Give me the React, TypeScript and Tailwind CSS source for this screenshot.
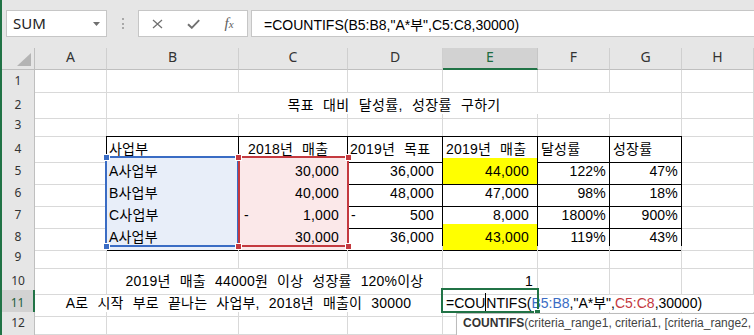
import React from 'react';

const GRID = 'grid grid-cols-[33px_72px_132px_109px_95px_95px_72px_72px_1fr]';
const COLS = ['A', 'B', 'C', 'D', 'E', 'F', 'G', 'H'];

type Def = { t?: React.ReactNode; span?: number; cls?: string; open?: boolean };

const _: Def = {};
const L = (t: string, extra = ''): Def => ({ t, cls: `justify-start pl-[2px] ${extra}` });
const N = (t: string, extra = ''): Def => ({ t, cls: `justify-end pr-[8px] ${extra}` });
const P = (t: string): Def => ({ t, cls: 'justify-end pr-[3px]' });
const Dash = (t: string, extra: string): Def => ({
  t: (
    <>
      <span>-</span>
      <span>{t}</span>
    </>
  ),
  cls: `justify-between pr-[8px] ${extra}`,
});

const BLUE = 'bg-[#e8eef9]';
const PINK = 'bg-[#fbe8e9]';
const YEL = 'bg-[#ffff00]';

const formula = (
  <span className="tracking-normal">
    =COU
    <span className="inline-block w-px h-[19px] bg-black align-[-4px]" />
    NTIFS(<span className="text-[#3a6cc4]">B5:B8</span>,"A*부",
    <span className="text-[#c4393f]">C5:C8</span>,30000)
  </span>
);

// 1행부터 13행까지
const rows: Def[][] = [
  [_, _, _, _, _, _, _, _],
  [
    _,
    { t: <span className="tracking-[0.35px]">목표 대비 달성률, 성장률 구하기</span>, span: 6, cls: 'justify-center' },
    _,
  ],
  [_, _, _, _, _, _, _, _],
  [
    _,
    L('사업부'),
    { t: '2018년 매출', cls: 'justify-start pl-[9px]' },
    L('2019년 목표'),
    L('2019년 매출', 'pl-[3px]'),
    L('달성률', 'pl-[3px]'),
    L('성장률', 'pl-[3px]'),
    _,
  ],
  [_, L('A사업부', BLUE), N('30,000', PINK), N('36,000'), N('44,000', YEL), P('122%'), P('47%'), _],
  [_, L('B사업부', BLUE), N('40,000', PINK), N('48,000'), N('47,000'), P('98%'), P('18%'), _],
  [_, L('C사업부', BLUE), Dash('1,000', `pl-[5px] ${PINK}`), Dash('500', 'pl-[3px]'), N('8,000'), P('1800%'), P('900%'), _],
  [_, L('A사업부', BLUE), N('30,000', PINK), N('36,000'), N('43,000', YEL), P('119%'), P('43%'), _],
  [_, _, _, _, _, _, _, _],
  [
    _,
    { t: '2019년 매출 44000원 이상 성장률 120%이상', span: 3, cls: 'justify-center' },
    { t: '1', cls: 'justify-end pr-[4px]' },
    _,
    _,
    _,
  ],
  [
    { t: 'A로 시작 부로 끝나는 사업부, 2018년 매출이 30000', span: 4, cls: 'justify-center' },
    { t: formula, cls: 'justify-start pl-[3px] relative z-10', open: true },
    { open: true },
    { open: true },
    { open: true },
  ],
  [_, _, _, _, _, _, _, _],
  [_, _, _, _, _, _, _, _],
];

const SPAN: Record<number, string> = { 1: '', 3: 'col-span-3', 4: 'col-span-4', 6: 'col-span-6' };

function inTable(r: number, c: number) {
  return r >= 4 && r <= 8 && c >= 1 && c <= 6;
}

function Square({ cls }: { cls: string }) {
  return <div className={`absolute w-[7px] h-[7px] border border-white ${cls}`} />;
}

export default function App() {
  return (
    <div className="w-[754px] h-[335px] overflow-hidden flex flex-col border-l-2 border-[#217346] bg-white text-black [font-family:'Noto_Sans','Noto_Sans_CJK_KR',sans-serif]">
      {/* 수식 입력줄 */}
      <div className="h-[48px] shrink-0 bg-[#e6e6e6] flex items-start pt-[10px]">
        <div className="ml-[4px] w-[101px] h-[27px] bg-white border border-[#c6c6c6] flex items-center justify-between pl-[6px] pr-[6px]">
          <span className="text-[15px] leading-none text-[#222]">SUM</span>
          <svg width="7" height="4" viewBox="0 0 7 4">
            <path d="M0 0h7L3.5 4z" fill="#6f6f6f" />
          </svg>
        </div>
        <div className="w-[31px] h-[27px] flex flex-col items-center justify-center gap-[2.5px]">
          <span className="w-[2px] h-[2px] bg-[#a8a8a8]" />
          <span className="w-[2px] h-[2px] bg-[#a8a8a8]" />
          <span className="w-[2px] h-[2px] bg-[#a8a8a8]" />
        </div>
        <div className="w-[110px] h-[27px] bg-white border border-[#c6c6c6] flex items-center">
          <div className="w-[36px] flex justify-center pt-[1px]">
            <svg width="11" height="10" viewBox="0 0 11 10">
              <path d="M1 1l9 8M10 1l-9 8" stroke="#707070" strokeWidth="1.3" />
            </svg>
          </div>
          <div className="w-[36px] flex justify-center pt-[1px]">
            <svg width="13" height="10" viewBox="0 0 13 10">
              <path d="M1 5.2l3.8 3.6L12.2 1.2" stroke="#707070" strokeWidth="1.9" fill="none" />
            </svg>
          </div>
          <div className="w-[36px] flex justify-center">
            <span className="[font-family:'Liberation_Serif',serif] italic text-[15px] leading-none text-[#5e5e5e]">
              f<span className="text-[11px]">x</span>
            </span>
          </div>
        </div>
        <div className="ml-[3px] flex-1 h-[27px] bg-white border border-r-0 border-[#c6c6c6] flex items-center pl-[12px] pt-[2px] text-[14px] leading-none whitespace-nowrap [font-family:'Liberation_Sans','Noto_Sans_CJK_KR',sans-serif]">
          =COUNTIFS(B5:B8,"A*부",C5:C8,30000)
        </div>
      </div>

      {/* 열 머리글 */}
      <div className={`${GRID} h-[22px] shrink-0 bg-[#e6e6e6]`}>
        <div className="border-r border-b border-[#bfbfbf] flex items-end justify-end pr-[3px] pb-[3px]">
          <svg width="14" height="13" viewBox="0 0 14 13">
            <path d="M14 0V13H0z" fill="#b4b4b4" />
          </svg>
        </div>
        {COLS.map((c) =>
          c === 'E' ? (
            <div
              key={c}
              className="border-r border-r-[#c6c6c6] border-b-2 border-b-[#217346] bg-[#d2d2d2] flex justify-center items-start text-[14px] leading-[18px] text-[#1d6b40]"
            >
              {c}
            </div>
          ) : (
            <div
              key={c}
              className="border-r border-r-[#cfcfcf] border-b border-b-[#bfbfbf] flex justify-center items-start text-[14px] leading-[18px] text-[#333]"
            >
              {c}
            </div>
          )
        )}
      </div>

      {/* 시트 */}
      <div className="relative flex-1">
        {rows.map((row, ri) => {
          const r = ri + 1;
          let col = 0;
          return (
            <div key={r} className={`${GRID} h-[22px]`}>
              {r === 11 ? (
                <div className="bg-[#d2d2d2] border-r-2 border-r-[#217346] border-b border-b-[#d0d0d0] flex justify-center items-center text-[12px] leading-[22px] text-[#1d5e3a]">
                  {r}
                </div>
              ) : (
                <div className="bg-[#e6e6e6] border-r border-r-[#bfbfbf] border-b border-b-[#d0d0d0] flex justify-center items-center text-[12px] leading-[22px] text-[#333]">
                  {r}
                </div>
              )}
              {row.map((d, i) => {
                const start = col;
                const span = d.span ?? 1;
                col += span;
                const end = col - 1;
                const right = d.open
                  ? 'border-r-transparent'
                  : inTable(r, end) || inTable(r, end + 1)
                  ? 'border-r-black'
                  : 'border-r-[#d9d9d9]';
                let bottom = 'border-b-[#d9d9d9]';
                for (let c = start; c <= end; c++) {
                  if (inTable(r, c) || inTable(r + 1, c)) bottom = 'border-b-black';
                }
                return (
                  <div
                    key={i}
                    className={`${SPAN[span]} flex items-start whitespace-nowrap border-r border-b ${right} ${bottom} text-[14px] leading-[26px] tracking-[0.2px] [word-spacing:5px] [font-family:'Liberation_Sans','Noto_Sans_CJK_KR',sans-serif] ${d.cls ?? ''}`}
                  >
                    {d.t}
                  </div>
                );
              })}
            </div>
          );
        })}

        {/* 참조 범위 표시 */}
        <div className="absolute left-[103px] top-[86px] w-[134px] h-[91px] border-2 border-[#3a6cc4]" />
        <div className="absolute left-[236px] top-[86px] w-[111px] h-[91px] border-2 border-[#c4393f]" />
        <Square cls="left-[101px] top-[84px] bg-[#3a6cc4]" />
        <Square cls="left-[101px] top-[173px] bg-[#3a6cc4]" />
        <Square cls="left-[233px] top-[84px] bg-[#c4393f]" />
        <Square cls="left-[233px] top-[173px] bg-[#c4393f]" />
        <Square cls="left-[343px] top-[84px] bg-[#c4393f]" />
        <Square cls="left-[343px] top-[173px] bg-[#c4393f]" />

        {/* 활성 셀 E11 */}
        <div className="absolute left-[439px] top-[218px] w-[98px] h-[25px] border-2 border-[#217346] z-20" />
        <Square cls="left-[532px] top-[239px] bg-[#217346] z-20" />

        {/* 함수 도움말 */}
        <div className="absolute left-[454px] top-[243px] w-[320px] h-[23px] bg-white border border-[#bcbcbc] shadow-[1px_1px_2px_rgba(0,0,0,0.15)] flex items-start pl-[6px] pt-[1px] text-[12px] leading-[16px] text-[#444] whitespace-nowrap z-30 [font-family:'Liberation_Sans',sans-serif]">
          <span className="font-bold text-[#333]">COUNTIFS</span>(criteria_range1, criteria1, [criteria_range2, criteria2], ...)
        </div>
      </div>
    </div>
  );
}
